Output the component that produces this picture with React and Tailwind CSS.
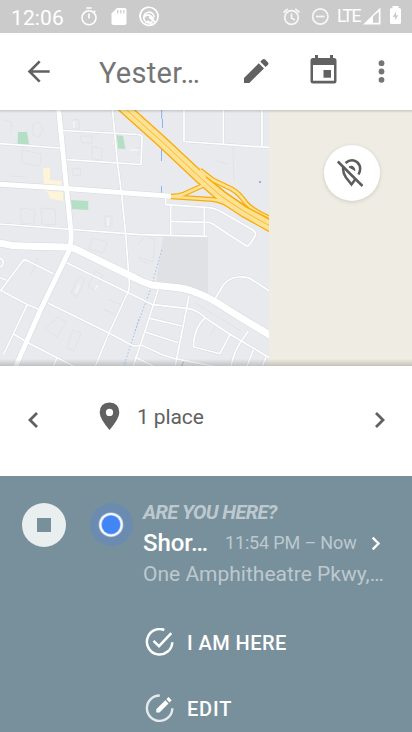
const thinRoads = [
  'M0 143.7 L60 148',
  'M62.7 130.5 L138 134.5 Q143 135 142 139 L141 164.5 L66.7 159.7',
  'M112.3 108 L117.5 163 L121.7 195 L126 238 L129 279 Q130 288 128 292 L109 333 L95 367',
  'M0 224 L140 234.7 L207 236.3',
  'M184 108 V141.5 L270 147.5',
  'M223.3 108 V144',
  'M262 108 V147',
  'M165.7 198 V204.7 L206.7 207.3 Q215 208 220 211 L253 230 Q257 233 255 236 L250 244 Q248 247 245 245 L231.7 236.5 L213 224 L209 222.3 L170.7 221.3',
  'M170.7 205.7 V235.5',
  'M204.3 207 V236.3',
  'M66.7 262.7 L135 296 L151.7 304.3 L188 308.7 Q197 310 205 317.7 L230 334.3 L270 358',
  'M48.3 303.3 L109.3 333.3 L133.3 346 L141.7 345.3 L163 355 L175 358.7 L218 367',
  'M0 290 L26.7 304.3 L38.3 309.3',
  'M1 290 L22 262 Q24 259 27 260.5 L53.5 273.7',
  'M0 277.7 L6.7 280.3',
  'M27.3 304.3 L3.3 355',
  'M13.3 333.7 L28 342.7 L73.3 366',
  'M56.7 358.7 L53 367',
  'M0 258 Q4 260 3 264 Q2 267 0 267',
  'M158.3 289.3 L146 328 L133 367',
  'M189 296 L182 332 L175 367',
  'M150 318.3 L181.7 326',
  'M145 332 L178.3 342.7',
  'M135 357 L155 367',
  'M205 317.7 Q194 328 193.3 346.7 L220 353.7 L230 334.3',
  'M248.3 331 L240 343 Q233 354 231 367',
  'M253.3 350 L246.7 367',
  'M266 357 L262 367',
  'M215 299 L223.3 285 Q230 277 239 277 Q248 276 254 281 L270 291.5',
]

const mainRoads = [
  'M58.5 108 L63.5 158 L66.7 190 L71 232 L71 240 L69 251 L40 311 L15 368',
  'M-2 184 L67 188.5 L140 194 L171.7 196.3',
]

const avenue =
  'M-2 242.7 Q10 246 22 246 L64 247 Q74 247 83 252.7 L135 278 Q144 283 152 285 L171 287 Q186 288 197 293 Q213 299 230 311 L272 336.5'

const ramps = [
  'M171 196.3 Q179 196 184 194 L204 185',
  'M171 196.8 L213 199.5 Q223 201 232 207',
  'M200 170 L213 180 L231.7 189 Q239 193 246 203 Q253 211 272 219',
]

const freeway =
  'M120 104 L135 117.5 L161.7 141.5 L201.7 179 L221.7 196.5 L245 212 L272 227'

const buildings =
  'M33 124 l6 -2 4 7 -4 8 -6 -2z M74 119 v10 h5 v-9z M80 136 h12 v7 h-10z M22 150 v13 l18 3 1 -12z M72 169 l8 -1 1 7 -8 1z M92 147 l10 1 -1 12 -9 -1z M136 148 h5 M137 154 h5 M3 120 l9 2 -2 12 M10 176 l16 1 M21 208 l14 2 -1 14 -13 -1z M41 208 l14 1 1 16 -14 -1z M105 216 h7 v10 h-7z M92 238 l15 4 -4 11 -14 -4z M38 258 l-7 17 M71 293 l8 -17 6 3 -8 18z M88 286 l7 -15 8 4 -8 16z M45 329 l13 -12 8 5 -9 15z M67 348 l6 -18 8 3 -7 18z M107 299 l15 6 M103 309 l14 6 M138 245 l7 -9 10 3 -2 23 -15 -5 M215 161 l14 3 M233 147 l1 34 M195 303 l46 28 M211 335 l4 -8 M140 260 l9 4'

function CityMap() {
  return (
    <svg className="h-64 w-[269px] shrink-0" viewBox="0 110 269 256" fill="none">
      <rect y="110" width="269" height="256" fill="#e8eaed" />
      <path d="M163 237 H208 V297 L188 291 L157 286 V276z" fill="#e0e1e5" />
      <path d={buildings} stroke="#dfe1e5" strokeWidth="0.8" />
      <path d="M74 121 v7 M113 143 l12 2 M130 150 h8 M129 163 l8 1 M108 218 v8 M76 293 l3 -8 M95 290 l3 -5" stroke="#f2f3f5" strokeWidth="2" />
      <path d="M18 132 H27 L29 144.5 H17.7z M116.7 135.3 L123 136 L125.5 149 L118 148.5z M71 200 L88.3 201 V210 L72 209z" fill="#b5dfc4" />
      <path d="M43 168 H50 V180 L61 181 L62 186 L44 185z M44 190.5 L63 192 V201 L50 198.5 L48 193z" fill="#fef5d9" />
      <g stroke="#8cb4f5">
        <path d="M161.7 110 V119 M162.5 119 V128 M161.5 144 V161 M161.5 186 V193" />
        <path d="M161.7 250 L151 288 L135 331 M139 319 L124 366" strokeWidth="0.8" strokeDasharray="1.5 2" />
      </g>
      <rect x="259" y="181" width="2" height="2" fill="#8cb4f5" />
      <g strokeLinejoin="round">
        {thinRoads.map((d) => <path key={d} d={d} stroke="#d6d9de" strokeWidth="2.5" />)}
        {mainRoads.map((d) => <path key={d} d={d} stroke="#d6d9de" strokeWidth="6" />)}
        <path d={avenue} stroke="#d6d9de" strokeWidth="8" />
        {thinRoads.map((d) => <path key={d} d={d} stroke="#fff" strokeWidth="1.7" />)}
        {mainRoads.map((d) => <path key={d} d={d} stroke="#fff" strokeWidth="5" />)}
        <path d={avenue} stroke="#fff" strokeWidth="7" />
        {ramps.map((d) => <path key={d} d={d} stroke="#f9ab0b" strokeWidth="5" />)}
        <path d={freeway} stroke="#f9ab0b" strokeWidth="12" />
        {ramps.map((d) => <path key={d} d={d} stroke="#fde293" strokeWidth="2.6" />)}
        <path d={freeway} stroke="#fde293" strokeWidth="9.4" />
        <path d={freeway} stroke="#f9b42a" strokeWidth="0.9" />
        <path d="M206 177 L225 192 L246 207 L270 219" stroke="#f9ab0b" strokeWidth="1.2" />
      </g>
      <path d="M182 366 v-2 l2 -2" stroke="#8ed3a5" />
    </svg>
  )
}

function StatusBar() {
  return (
    <div className="flex h-[33px] items-center bg-[#cbcbcb] text-white">
      <span className="mt-[3px] ml-[11px] w-[68px] text-[21px] leading-[33px] tracking-[0.1px]">12:06</span>
      <svg className="h-[33px] w-[83px]" viewBox="79 0 83 33" fill="none" stroke="#fff" strokeWidth="1.6">
        <circle cx="89" cy="17.8" r="7" />
        <path d="M86.3 8 h5.4 M89 13.5 v5 M94 12 l1.3 -1.3" />
        <path d="M117 8 h7.5 q2 0 2 2 v13 q0 2 -2 2 h-11 q-2 0 -2 -2 V13.5z" fill="#fff" stroke="none" />
        <path d="M117.8 10 v3.5 M120.8 10 v3.5 M123.8 10 v3.5" stroke="#cbcbcb" strokeWidth="1.2" />
        <path d="M155 23 A9 9 0 1 1 158 17 Q158 20.5 155.5 22.5 L149 17" strokeWidth="1.7" />
        <path d="M152.5 21.5 A5.3 5.3 0 1 1 154.3 17 M144.5 17 Q147 13.5 150 15.5 L154 19 M152 25 L147.5 20.5" strokeWidth="1.7" />
      </svg>
      <svg className="ml-[120px] h-[33px] w-[49px]" viewBox="282 0 49 33" fill="none" stroke="#fff" strokeOpacity="0.85" strokeWidth="1.7">
        <circle cx="291.5" cy="17.5" r="6.8" />
        <path d="M291.5 13.5 v4.5 l3.3 2 M283.5 12.5 l4.2 -3.6 M299.5 12.5 l-4.2 -3.6" />
        <circle cx="320.3" cy="16.5" r="7.7" />
        <path d="M316 16.5 h8.6" />
      </svg>
      <span className="mb-px ml-[6px] w-[25px] text-[17.5px] leading-[33px] tracking-[-1.5px]">LTE</span>
      <svg className="h-[33px] w-[45px]" viewBox="362 0 45 33">
        <path d="M363 24.5 L380.5 7.5 V24.5z" fill="#fff" />
        <path d="M373 16.5 L378.8 11.5 V22.8 H373z" fill="#cbcbcb" />
        <path d="M392.5 6 h6 v2 h1 q1.5 0 1.5 1.5 v13 q0 1.5 -1.5 1.5 h-8 q-1.5 0 -1.5 -1.5 v-13 q0 -1.5 1.5 -1.5 h1z" fill="#fff" />
        <path d="M396 11.5 L392.8 17 H395.2 V20.5 L398.2 15.2 H396z" fill="#cbcbcb" />
      </svg>
    </div>
  )
}

function AppBar() {
  return (
    <header className="flex h-[77px] items-center bg-white text-[#616161]">
      <svg className="ml-[22px] h-8 w-8" viewBox="22 56 32 32" fill="none" stroke="#616161" strokeWidth="2.6">
        <path d="M49.7 71.5 H29.5 M39.7 61.3 L29.5 71.5 L39.7 81.7" />
      </svg>
      <h1 className="mt-[3px] ml-[45px] w-[141px] text-[29px] leading-[34px] tracking-[0.3px] text-[#757575]">Yester…</h1>
      <svg className="h-[34px] w-[34px]" viewBox="240 55 34 34" fill="#616161">
        <path d="M244 78 L258.8 63.2 L264 68.4 L249.3 83 H244z M260.3 61.7 L262.4 59.6 Q263.8 58.2 265.2 59.6 L267.8 62.2 Q269.2 63.6 267.8 65 L265.6 67.1z" />
      </svg>
      <svg className="ml-[33px] h-[34px] w-[34px]" viewBox="307 55 34 34">
        <path fillRule="evenodd" d="M315 55 h3 v3 h12 v-3 h3 v3 h1 q2.5 0 2.5 2.5 V81 q0 2.5 -2.5 2.5 H313 q-2.5 0 -2.5 -2.5 V60.5 q0 -2.5 2.5 -2.5 h2z M313 65 V80.8 H334 V65z" fill="#616161" />
        <rect x="323.5" y="70" width="7.5" height="7.7" fill="#616161" />
      </svg>
      <svg className="ml-[32px] h-[34px] w-4" viewBox="373 55 16 34" fill="#757575">
        <circle cx="381.5" cy="63.2" r="2.9" />
        <circle cx="381.5" cy="71.5" r="2.9" />
        <circle cx="381.5" cy="79.8" r="2.9" />
      </svg>
    </header>
  )
}

function MapPane() {
  return (
    <section className="relative flex h-64 bg-[#efece3]">
      <CityMap />
      <button className="mt-[34.5px] ml-[55px] flex h-14 w-14 items-center justify-center rounded-full bg-white shadow-[0_1px_4px_rgba(0,0,0,0.14)]">
        <svg className="h-8 w-8" viewBox="336 156.5 32 32" fill="none" stroke="#5c5c5c" strokeWidth="2.5">
          <path d="M345.5 162.5 Q351.5 157.5 357 161.5 Q362.5 166.5 358.5 174 M343.5 166 Q342 171 346 177 L351.5 184 L355.5 178.5" />
          <path d="M349 166.5 Q353.5 163.5 355 170z" fill="#5c5c5c" stroke="#5c5c5c" strokeWidth="1" />
          <path d="M337.8 161 L362.5 185.5" />
        </svg>
      </button>
      <div className="absolute inset-x-0 top-0 h-[3px] bg-linear-to-b from-black/15 to-transparent" />
      <div className="absolute inset-x-0 bottom-0 h-[7px] bg-linear-to-b from-transparent to-black/18" />
    </section>
  )
}

function Chevron({ left, className }) {
  return (
    <svg className={className} viewBox="0 0 12 18" fill="none" stroke="currentColor" strokeWidth="2.8">
      <path d={left ? 'M10 2 L3 9 L10 16' : 'M2 2 L9 9 L2 16'} />
    </svg>
  )
}

function PlaceCount() {
  return (
    <section className="flex h-[110px] items-center bg-white text-[#616161]">
      <Chevron left className="mb-[2px] ml-[27px] h-[18px] w-3" />
      <svg className="mb-[9px] ml-[60px] h-[29px] w-[21px]" viewBox="99 401 21 29">
        <path fillRule="evenodd" d="M109.5 401.5 Q119.3 401.8 119.3 411.5 Q119.3 417.5 109.5 429 Q99.7 417.5 99.7 411.5 Q99.7 401.8 109.5 401.5z M109.5 407.8 A3.6 3.6 0 1 0 109.5 415 A3.6 3.6 0 1 0 109.5 407.8z" fill="#616161" />
      </svg>
      <span className="mb-[8px] ml-[17px] w-[237px] text-[21px] leading-6 tracking-[-0.1px]">1 place</span>
      <Chevron className="mb-[2px] h-[18px] w-3" />
    </section>
  )
}

function CurrentPlace() {
  return (
    <section className="flex h-64 bg-[#78909c] text-white">
      <div className="mt-[27px] ml-[22px] flex h-11 w-11 shrink-0 items-center justify-center rounded-full bg-[#e9eeef]">
        <i className="h-[14px] w-[14px] bg-[#78909c]" />
      </div>
      <div className="mt-[27px] ml-6 flex h-[43px] w-[43px] shrink-0 items-center justify-center rounded-full bg-[#6b8cb0]">
        <svg className="h-[27px] w-[27px]" viewBox="0 0 27 27">
          <circle cx="13" cy="13.7" r="12.5" fill="#9bb3d6" />
          <circle cx="13" cy="13.7" r="11.8" fill="#f5f8fc" />
          <circle cx="13" cy="13.7" r="9.7" fill="#8fb4f5" />
          <circle cx="13" cy="13.7" r="9.1" fill="#4285f4" />
        </svg>
      </div>
      <div className="ml-[10px] flex w-[250px] flex-col">
        <p className="mt-[24px] text-[20px] leading-6 font-bold tracking-[-0.6px] text-[#bdc9cf] italic">ARE YOU HERE?</p>
        <div className="mt-[3px] flex h-8 items-center">
          <span className="w-[82px] text-[24px] font-medium tracking-[-0.1px]">Shor…</span>
          <span className="mb-px w-[146px] text-[18px] tracking-[-0.16px] whitespace-nowrap text-[#bdc9cf]">11:54 PM – Now</span>
          <Chevron className="h-[15px] w-[10px]" />
        </div>
        <p className="mt-[3px] text-[21px] leading-6 whitespace-nowrap text-[#bdc9cf]">One Amphitheatre Pkwy,…</p>
        <button className="mt-[41px] flex h-8 items-center text-[20px] font-medium tracking-[0.45px]">
          <svg className="ml-px h-[30px] w-[30px]" viewBox="143.7 627.3 30 30" fill="none" stroke="#fff" strokeWidth="2.5">
            <path d="M164 629.3 A12.7 12.7 0 1 0 172 641.5 M153.2 640.2 L158.7 645.5 L171 632.5" />
          </svg>
          <span className="ml-[13px]">I AM HERE</span>
        </button>
        <button className="mt-[34px] flex h-8 items-center text-[20px] font-medium tracking-[0.8px]">
          <svg className="ml-px h-[30px] w-[30px]" viewBox="143.7 693.3 30 30" fill="none" stroke="#fff" strokeWidth="2.4">
            <path d="M159.5 694.8 A12.7 12.7 0 1 0 172 707.5" stroke="#e4eaec" />
            <path d="M156 708.5 L165 699.5 L168.2 702.7 L159.2 711.7 H156z M166 698.5 L168.2 696.3 L171.4 699.5 L169.2 701.7z" fill="#fff" stroke="none" />
          </svg>
          <span className="ml-[13px]">EDIT</span>
        </button>
      </div>
    </section>
  )
}

export default function App() {
  return (
    <main className="h-[732px] w-[412px] overflow-hidden bg-white font-['Roboto',sans-serif]">
      <StatusBar />
      <AppBar />
      <MapPane />
      <PlaceCount />
      <CurrentPlace />
    </main>
  )
}
